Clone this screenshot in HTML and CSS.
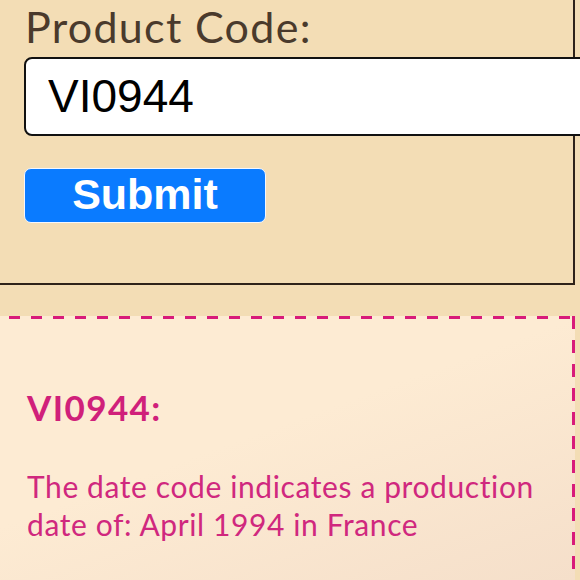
FILE: index.html
```html
<!DOCTYPE html>
<html lang="en">
<head>
<meta charset="utf-8">
<title>Product Code</title>
<link rel="stylesheet" href="styles.css">
</head>
<body>
  <form class="panel">
    <label class="label" for="code">Product Code:</label>
    <input class="code-input" id="code" type="text" value="VI0944">
    <button class="submit" type="button">Submit</button>
  </form>
  <section class="result">
    <h2 class="result-title">VI0944:</h2>
    <p class="result-text">The date code indicates a production date of: April 1994 in France</p>
  </section>
</body>
</html>
```
FILE: styles.css
```css
html, body {
  margin: 0;
  padding: 0;
}
body {
  width: 580px;
  height: 580px;
  overflow: hidden;
  background: #f3ddb5;
  font-family: Lato, "Noto Sans", sans-serif;
}
.panel {
  box-sizing: border-box;
  width: 575px;
  height: 285px;
  border-right: 2px solid #2e2219;
  border-bottom: 2px solid #2e2219;
  padding: 1px 0 0 24px;
  display: flex;
  flex-direction: column;
  align-items: flex-start;
}
.label {
  font-size: 43px;
  line-height: 1.2;
  letter-spacing: 1.3px;
  color: #4a3a2c;
  padding-left: 1px;
}
.code-input {
  box-sizing: border-box;
  margin-top: 4px;
  width: 580px;
  height: 79px;
  border: 2px solid #111;
  border-radius: 8px;
  background: #fff;
  padding: 0 0 0 22px;
  font-family: "Liberation Sans", Arial, sans-serif;
  font-size: 46px;
  color: #000;
  outline: none;
}
.submit {
  box-sizing: border-box;
  margin-top: 32px;
  width: 242px;
  height: 55px;
  border: 1.5px solid #f4f7ff;
  border-radius: 7px;
  background: #0a7bff;
  color: #fff;
  font-family: "Liberation Sans", Arial, sans-serif;
  font-weight: bold;
  font-size: 43px;
  line-height: 1;
  padding: 0 0 2px;
}
.result {
  box-sizing: border-box;
  margin: 31px 0 0 -10px;
  width: 585px;
  height: 264px;
  background-color: #fdebd3;
  background-image:
    repeating-linear-gradient(90deg, #d81b7a 0 11px, transparent 11px 22px),
    repeating-linear-gradient(180deg, #d81b7a 0 13px, transparent 13px 24px),
    linear-gradient(160deg, #fdebd3 45%, #f5dfca 100%);
  background-size: 572px 3px, 3px 100%, 100% 100%;
  background-position: 19px 0, right 0 top 0, 0 0;
  background-repeat: no-repeat;
  padding: 70px 0 0 37px;
}
.result-title {
  margin: 0;
  font-size: 35px;
  line-height: 1.2;
  font-weight: 700;
  letter-spacing: 1.4px;
  color: #d0207a;
}
.result-text {
  margin: 39px 0 0;
  font-size: 30px;
  line-height: 38px;
  letter-spacing: 0.6px;
  color: #d0287e;
  width: 530px;
}
```
